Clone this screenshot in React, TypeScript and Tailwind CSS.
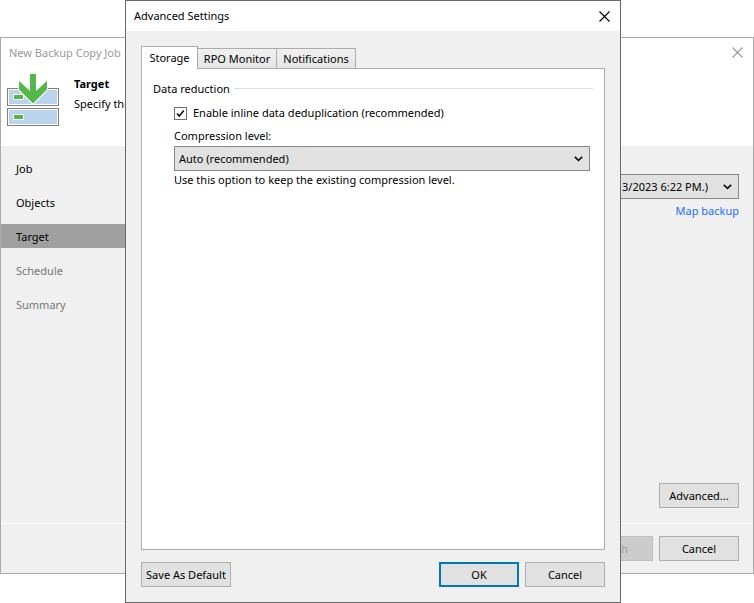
import { useState } from "react";

const steps = [
  { name: "Job", done: true },
  { name: "Objects", done: true },
  { name: "Target", done: true },
  { name: "Schedule", done: false },
  { name: "Summary", done: false },
];

const tabs = ["Storage", "RPO Monitor", "Notifications"];

const buttonStyle = "h-[25px] border border-[#adadad] bg-[#e1e1e1] text-center whitespace-nowrap";

function CloseIcon() {
  return (
    <svg className="w-[11px] h-[11px]" viewBox="0 0 11 11" fill="none" stroke="currentColor" strokeWidth="1.1">
      <path d="M0.5 0.5L10.5 10.5M10.5 0.5L0.5 10.5" />
    </svg>
  );
}

function Chevron() {
  return (
    <svg
      className="absolute right-[7px] top-[10px] w-[9px] h-[6px] pointer-events-none"
      viewBox="0 0 9 6"
      fill="none"
      stroke="#111"
      strokeWidth="1.7"
    >
      <path d="M0.8 0.8L4.5 4.4L8.2 0.8" />
    </svg>
  );
}

function TargetIcon() {
  return (
    <svg className="w-[52px] h-[53px] shrink-0" viewBox="0 0 52 53">
      <rect x="0.5" y="15.5" width="51" height="17" fill="#fff" stroke="#808080" />
      <rect x="2" y="17" width="48" height="14" fill="#bbd4ee" />
      <rect x="0.5" y="35.5" width="51" height="17" fill="#fff" stroke="#808080" />
      <rect x="2" y="37" width="48" height="14" fill="#bbd4ee" />
      <rect x="6.5" y="21.5" width="10" height="5" fill="#54b848" stroke="#fff" />
      <rect x="6.5" y="41.5" width="10" height="5" fill="#54b848" stroke="#fff" />
      <path
        d="M23 1H29V18L40 8V16.5L26 30.5L12 16.5V8L23 18Z"
        fill="#54b848"
        stroke="#fff"
        strokeWidth="2"
        paintOrder="stroke"
      />
    </svg>
  );
}

function Wizard() {
  return (
    <div className="flex-1 flex flex-col border border-[#aaa] bg-[#f0f0f0]">
      <div className="bg-white h-[108px]">
        <div className="h-[29px] flex items-center justify-between pl-2 pr-[10px] text-[#999]">
          <h1>New Backup Copy Job</h1>
          <button aria-label="Close wizard"><CloseIcon /></button>
        </div>
        <div className="flex gap-[15px] px-[6px] pt-[6px]">
          <TargetIcon />
          <div className="pt-[3px] space-y-1">
            <h2 className="font-bold">Target</h2>
            <p>Specify the</p>
          </div>
        </div>
      </div>

      <div className="flex-1 flex">
        <nav className="w-[160px] pt-[10px] flex flex-col gap-[10px]">
          {steps.map((step) => (
            <button
              key={step.name}
              className={`h-6 pt-[2px] pl-[15px] text-left ${step.done ? "text-black" : "text-[#777]"} ${
                step.name === "Target" ? "bg-[#a0a0a0]" : ""
              }`}
            >
              {step.name}
            </button>
          ))}
        </nav>
        <div className="flex-1 flex flex-col items-end pt-7 pb-[15px] pr-[14px]">
          <div className="relative w-full pl-3">
            <select
              aria-label="Backup repository"
              className="w-full h-[25px] appearance-none border border-[#888] bg-[#e1e1e1] pr-[30px] [text-align-last:right]"
            >
              <option>3/2023 6:22 PM.)</option>
            </select>
            <Chevron />
          </div>
          <a href="#" className="mt-1 text-[#1a6cff]">Map backup</a>
          <button className={`${buttonStyle} w-20 mt-auto`}>Advanced...</button>
        </div>
      </div>

      <div className="border-t border-white flex justify-end gap-[6px] pt-3 pb-3 pr-[14px]">
        <button disabled className="w-20 h-[25px] border border-[#bfbfbf] bg-[#ccc] text-[#a0a0a0]">Finish</button>
        <button className={`${buttonStyle} w-20`}>Cancel</button>
      </div>
    </div>
  );
}

function StorageTab() {
  const [dedupe, setDedupe] = useState(true);

  return (
    <div className="pt-3 px-[11px]">
      <div className="flex items-center gap-1">
        <h3>Data reduction</h3>
        <div className="flex-1 border-t border-[#dcdcdc] mb-[2px]" />
      </div>
      <div className="pl-[21px] pr-[3px]">
        <label className="mt-2 flex items-center gap-[6px]">
          <span className="relative w-[13px] h-[13px]">
            <input
              type="checkbox"
              checked={dedupe}
              onChange={(e) => setDedupe(e.target.checked)}
              className="block w-[13px] h-[13px] appearance-none border border-[#707070] bg-white"
            />
            {dedupe && (
              <svg
                className="absolute inset-0 w-[13px] h-[13px] pointer-events-none"
                viewBox="0 0 13 13"
                fill="none"
                stroke="#111"
                strokeWidth="1.6"
              >
                <path d="M3 6.5L5.3 9L9.8 3.4" />
              </svg>
            )}
          </span>
          Enable inline data deduplication (recommended)
        </label>
        <label htmlFor="compression" className="mt-[7px] block">Compression level:</label>
        <div className="relative mt-[2px]">
          <select
            id="compression"
            className="block w-full h-[25px] appearance-none border border-[#888] bg-[#e1e1e1] pl-1 pr-6"
          >
            <option>Auto (recommended)</option>
          </select>
          <Chevron />
        </div>
        <p className="mt-px">Use this option to keep the existing compression level.</p>
      </div>
    </div>
  );
}

function SettingsDialog() {
  const [active, setActive] = useState("Storage");

  return (
    <div
      role="dialog"
      aria-label="Advanced Settings"
      className="absolute inset-y-0 left-[125px] right-[133px] flex flex-col border border-[#696969] bg-[#f0f0f0]"
    >
      <div className="h-[30px] bg-white flex items-center justify-between pl-2 pr-[10px]">
        <h2>Advanced Settings</h2>
        <button aria-label="Close"><CloseIcon /></button>
      </div>

      <div className="flex-1 flex flex-col px-[15px] pt-[15px] pb-[15px]">
        <div role="tablist" className="flex items-end">
          {tabs.map((tab) => (
            <button
              key={tab}
              role="tab"
              aria-selected={active === tab}
              onClick={() => setActive(tab)}
              className={
                active === tab
                  ? "relative z-10 h-[23px] -mb-px min-w-[57px] px-[7px] border border-b-0 border-[#acacac] bg-white"
                  : "h-5 min-w-[79px] px-[5px] border border-b-0 border-l-0 border-[#acacac] bg-linear-to-b from-[#f0f0f0] to-[#e5e5e5]"
              }
            >
              {tab}
            </button>
          ))}
        </div>
        <div role="tabpanel" className="flex-1 border border-[#acacac] bg-white">
          {active === "Storage" && <StorageTab />}
        </div>
        <div className="mt-3 flex gap-[6px]">
          <button className={`${buttonStyle} w-[90px] mr-auto`}>Save As Default</button>
          <button className="w-20 h-[25px] border-2 border-[#0078b4] bg-[#e1e1e1]">OK</button>
          <button className={`${buttonStyle} w-20`}>Cancel</button>
        </div>
      </div>
    </div>
  );
}

export default function App() {
  return (
    <div className="relative min-h-screen flex flex-col overflow-hidden bg-white pt-[37px] pb-[29px] font-['Noto_Sans','Open_Sans',sans-serif] text-[11px] leading-4 text-black">
      <Wizard />
      <SettingsDialog />
    </div>
  );
}
